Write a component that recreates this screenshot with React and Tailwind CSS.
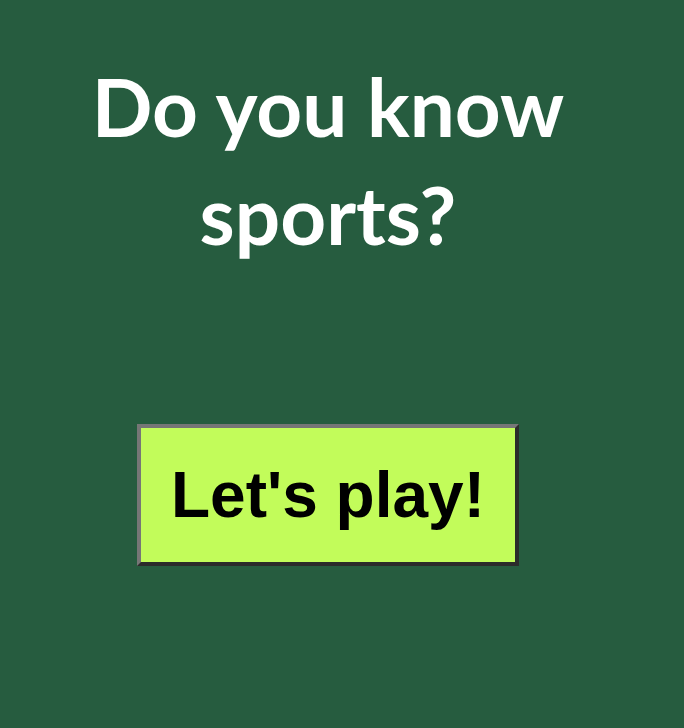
import React from 'react';

export default function App() {
  return (
    <div className="min-h-[728px] w-full bg-[#265c3f]">
      <div className="flex w-[656px] flex-col items-center pt-[52px]">
        {/* Title */}
        <h1 className="text-center font-['Lato',sans-serif] text-[80px] font-bold leading-[108px] text-white">
          Do you know
          <br />
          sports?
        </h1>

        {/* Start button */}
        <button className="mt-[156px] border-4 border-t-[#767676] border-l-[#767676] border-r-[#2b2b2b] border-b-[#2b2b2b] bg-[#c2fc5a] px-[30px] py-[30px] font-['Liberation_Sans',Arial,sans-serif] text-[64px] font-bold leading-[74px] text-black">
          Let's play!
        </button>
      </div>
    </div>
  );
}
